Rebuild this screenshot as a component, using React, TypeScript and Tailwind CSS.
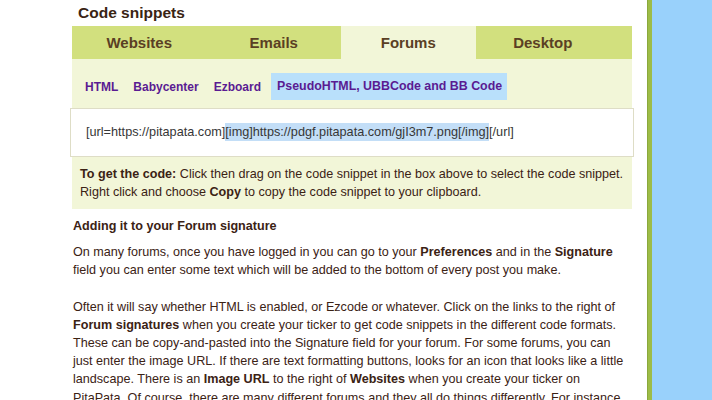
import React from "react";

const font = { fontFamily: '"Liberation Sans", Arial, sans-serif' };

export default function App() {
  const tabs = [
    { label: "Websites", active: false },
    { label: "Emails", active: false },
    { label: "Forums", active: true },
    { label: "Desktop", active: false },
  ];
  const links = ["HTML", "Babycenter", "Ezboard"];
  return (
    <div className="flex w-[712px] h-[400px] overflow-hidden bg-white" style={font}>
      <div className="w-[647px] shrink-0 bg-white">
        <div className="w-[560px] ml-[72px]">
          <div className="h-[26px] pl-[6px] pt-[2px] text-[15.5px] leading-[22px] font-bold text-[#3a2414]">
            Code snippets
          </div>
          <div className="flex h-[33px] bg-[#d2e07e]">
            {tabs.map((t) => (
              <div
                key={t.label}
                className={`w-[134.5px] flex items-center justify-center pt-[2px] text-[15px] font-bold text-[#5a3f24] ${
                  t.active ? "bg-[#f2f6d8]" : "bg-[#d2e07e]"
                }`}
              >
                {t.label}
              </div>
            ))}
          </div>
          <div className="bg-[#f2f6d8] h-[49px] pt-[14px] pl-[7px] flex gap-[3px] items-start">
            {links.map((l) => (
              <div
                key={l}
                className="h-[27px] px-[6px] flex items-center text-[12px] font-bold text-[#5a1b92]"
              >
                {l}
              </div>
            ))}
            <div className="ml-[1px] h-[27px] pl-[6px] pr-[5px] flex items-center text-[12.4px] font-bold text-[#5a1b92] bg-[#b9e0fb]">
              PseudoHTML, UBBCode and BB Code
            </div>
          </div>
          <div className="-ml-[2px] w-[564px] h-[49px] border border-[#deddc6] bg-white flex items-center pl-[15px] pt-[1px] text-[12.7px] text-[#363636]">
            <span>
              [url=https://pitapata.com]
              <span className="bg-[#c3def7] py-[2px]">[img]https://pdgf.pitapata.com/gjI3m7.png[/img]</span>
              [/url]
            </span>
          </div>
          <div className="bg-[#f2f6d8] px-[8px] py-[8px] text-[12.6px] leading-[18px] text-[#3b2214] whitespace-nowrap">
            <div>
              <b>To get the code:</b> Click then drag on the code snippet in the box above to select the code snippet.
            </div>
            <div>
              Right click and choose <b>Copy</b> to copy the code snippet to your clipboard.
            </div>
          </div>
          <div className="pl-[1px] text-[#3b2214] text-[12.6px] leading-[18.2px]">
            <div className="mt-[8px] font-bold">Adding it to your Forum signature</div>
            <div className="mt-[8px] whitespace-nowrap">
              <div>
                On many forums, once you have logged in you can go to your <b>Preferences</b> and in the <b>Signature</b>
              </div>
              <div>field you can enter some text which will be added to the bottom of every post you make.</div>
              <div className="h-[18px]" />
              <div>
                Often it will say whether HTML is enabled, or Ezcode or whatever. Click on the links to the right of
              </div>
              <div>
                <b>Forum signatures</b> when you create your ticker to get code snippets in the different code formats.
              </div>
              <div>
                These can be copy-and-pasted into the Signature field for your forum. For some forums, you can
              </div>
              <div>
                just enter the image URL. If there are text formatting buttons, looks for an icon that looks like a little
              </div>
              <div>
                landscape. There is an <b>Image URL</b> to the right of <b>Websites</b> when you create your ticker on
              </div>
              <div>
                PitaPata. Of course, there are many different forums and they all do things differently. For instance,
              </div>
            </div>
          </div>
        </div>
      </div>
      <div className="w-[5px] shrink-0 bg-[#9dbc47] border-l border-[#8aa83c]" />
      <div className="flex-1 bg-[#99d1fb]" />
    </div>
  );
}
